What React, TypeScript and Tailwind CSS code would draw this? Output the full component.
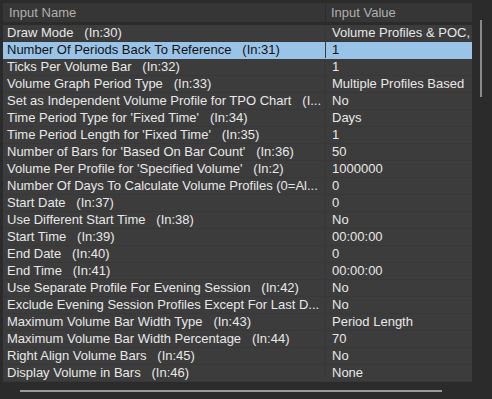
const rows: [string, string][] = [
  ['Draw Mode   (In:30)', 'Volume Profiles & POC,'],
  ['Number Of Periods Back To Reference   (In:31)', '1'],
  ['Ticks Per Volume Bar   (In:32)', '1'],
  ['Volume Graph Period Type   (In:33)', 'Multiple Profiles Based'],
  ['Set as Independent Volume Profile for TPO Chart   (I...', 'No'],
  ["Time Period Type for 'Fixed Time'   (In:34)", 'Days'],
  ["Time Period Length for 'Fixed Time'   (In:35)", '1'],
  ["Number of Bars for 'Based On Bar Count'   (In:36)", '50'],
  ["Volume Per Profile for 'Specified Volume'   (In:2)", '1000000'],
  ['Number Of Days To Calculate Volume Profiles (0=Al...', '0'],
  ['Start Date   (In:37)', '0'],
  ['Use Different Start Time   (In:38)', 'No'],
  ['Start Time   (In:39)', '00:00:00'],
  ['End Date   (In:40)', '0'],
  ['End Time   (In:41)', '00:00:00'],
  ['Use Separate Profile For Evening Session   (In:42)', 'No'],
  ['Exclude Evening Session Profiles Except For Last D...', 'No'],
  ['Maximum Volume Bar Width Type   (In:43)', 'Period Length'],
  ['Maximum Volume Bar Width Percentage   (In:44)', '70'],
  ['Right Align Volume Bars   (In:45)', 'No'],
  ['Display Volume in Bars   (In:46)', 'None'],
];

export default function App() {
  return (
    <div
      className="w-[492px] h-[399px] bg-[#2b2b2b] overflow-hidden text-[13px]"
      style={{ fontFamily: '"Liberation Sans", Arial, sans-serif' }}
    >
      <div className="flex pt-[3px] pl-[3px]">
        <div className="w-[469px]">
          <div className="flex h-[20px] bg-[#363636] text-[#b0b0b0] border-b border-[#2b2b2b]">
            <div className="w-[323px] pl-[6px] flex items-center border-r border-[#2b2b2b] whitespace-nowrap">Input Name</div>
            <div className="flex-1 pl-[5px] flex items-center whitespace-nowrap">Input Value</div>
          </div>
          <div className="mt-[2px]">
            {rows.map(([name, value], i) => {
              const sel = i === 1;
              return (
                <div
                  key={i}
                  className={`flex h-[17px] border-b leading-[16px] ${
                    sel ? 'bg-[#99c4e8] text-[#111111] border-[#99c4e8]' : 'bg-[#3c3c3c] text-[#e8e8e8] border-[#383838]'
                  }`}
                >
                  <div className={`w-[323px] pl-[4px] whitespace-nowrap overflow-hidden border-r ${sel ? 'border-[#3c3c3c]' : 'border-[#383838]'}`}>
                    {name.replace(/ {3}/g, '\u00a0\u00a0\u00a0')}
                  </div>
                  <div className="flex-1 pl-[6px] whitespace-nowrap overflow-hidden">{value}</div>
                </div>
              );
            })}
          </div>
        </div>
        <div className="ml-[8px] mt-[17px] w-[2px] h-[77px] bg-[#8a8a8a]" />
      </div>
      <div className="ml-[20px] mt-[8px] w-[422px] h-[2px] bg-[#9a9a9a]" />
    </div>
  );
}
